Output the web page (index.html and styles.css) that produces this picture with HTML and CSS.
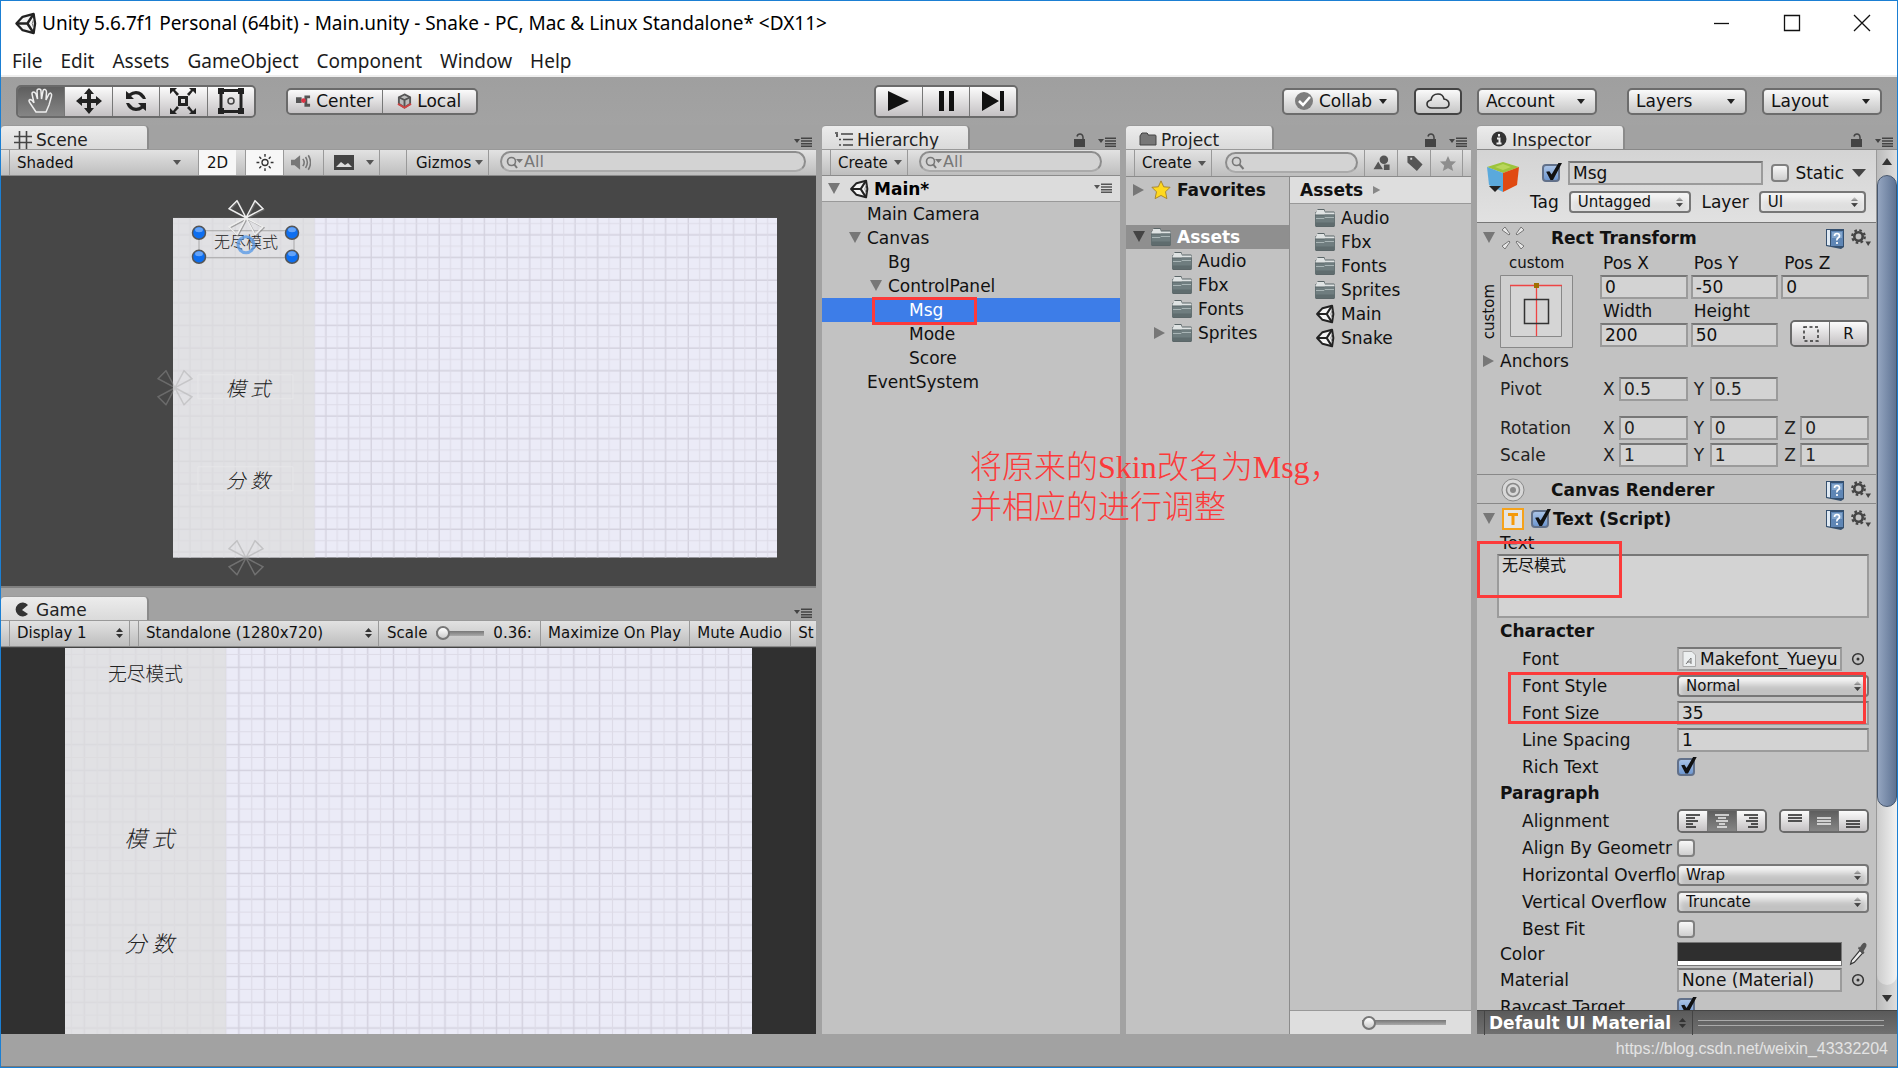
FILE: index.html
```html
<!DOCTYPE html>
<html lang="en">
<head>
<meta charset="utf-8">
<title>Unity 5.6.7f1 Personal (64bit) - Main.unity - Snake</title>
<link rel="stylesheet" href="styles.css">
</head>
<body>
<svg class="defs" aria-hidden="true">
  <symbol id="unity" viewBox="0 0 24 24"><path d="M2.5 12 9 5l11.500-3L22 12l-1.500 10L9 19z" fill="#f4f4f4" stroke="#222" stroke-width="2.400" stroke-linejoin="round"/><path d="M2.500 12H14L20.500 2M14 12l6.500 10" fill="none" stroke="#222" stroke-width="2.600"/><path d="M20.500 7.500 19 12l1.500 4.500" fill="none" stroke="#777" stroke-width="1"/></symbol>
  <symbol id="folder" viewBox="0 0 22 19"><path d="M1 6V4l2-1V1.500L4 .5h6l1 1V3h9l1 1v13.500l-1 1H2l-1-1z" fill="#5b6668"/><path d="M1.500 6V4.500L3 3V1.500h7L11 4h9.500V6z" fill="#dfe3e3"/><path d="M1.500 7H10l1-1h9.500v11.500h-19z" fill="#6f7d7f"/><path d="M2 10h8l1-1h9" fill="none" stroke="#a9b5b6"/><path d="M1.500 14h19v3.500h-19z" fill="#5f6c6e"/></symbol>
  <symbol id="menu" viewBox="0 0 18 10"><path d="M0 2h6L3 6z"/><path d="M7 .5h11v1.500H7zM7 3.200h11v1.500H7zM7 5.900h11v1.500H7zM7 8.500h11V10H7z"/></symbol>
  <symbol id="lock" viewBox="0 0 12 14"><path d="M0 6h11v8H0z"/><path d="M3 3.500Q3.500 1 6 1t3 3v3" fill="none" stroke="currentColor" stroke-width="1.500"/></symbol>
  <symbol id="down" viewBox="0 0 12 12"><path d="M0 0h12L6 11z"/></symbol>
  <symbol id="right" viewBox="0 0 12 12"><path d="M0 0v12l11-6z"/></symbol>
  <symbol id="lens" viewBox="0 0 18 14"><circle cx="5.500" cy="5.500" r="4" fill="none" stroke="currentColor" stroke-width="1.600"/><path d="m8.500 8.500 4 4.500" stroke="currentColor" stroke-width="2"/></symbol>
  <symbol id="lensmore" viewBox="0 0 18 14"><circle cx="5.500" cy="6.500" r="4" fill="none" stroke="currentColor" stroke-width="1.600"/><path d="m8 9 3 4" stroke="currentColor" stroke-width="2"/><path d="M10 4h7l-3.500 4z"/></symbol>
  <symbol id="book" viewBox="0 0 20 21"><path d="M1 1h18v18l-3 2L1 18z" fill="#35506f"/><path d="M2 2h3v15.500L2 17z" fill="#dfe9f3"/><path d="M6 3h12v15H6z" fill="#5f86b5"/><path d="M7 4h10v6H7z" fill="#84a6cc"/><path d="M9.500 8q0-2.500 2.500-2.500T14.500 8q0 1-1.500 2t-1 2.500M12 14v2" fill="none" stroke="#fff" stroke-width="1.700"/></symbol>
  <symbol id="gear" viewBox="0 0 20 18"><circle cx="7.500" cy="7.500" r="4.200" fill="none" stroke="#444" stroke-width="2.600"/><circle cx="7.500" cy="7.500" r="6.300" fill="none" stroke="#444" stroke-width="2.200" stroke-dasharray="2.600 2.350"/><path d="M14.500 12.500H20L17.200 17z" fill="#444"/></symbol>
  <symbol id="pick" viewBox="0 0 12 12"><circle cx="6" cy="6" r="4.600" fill="none" stroke="#333" stroke-width="1.300"/><circle cx="6" cy="6" r="1.300" fill="#333"/></symbol>
  <symbol id="flower" viewBox="0 0 36 36"><path d="M18 18 9 1 1 9zM18 18 27 1l8 8zM18 18 1 27l8 8zM18 18l17 9-8 8z" fill="none" stroke="currentColor" stroke-width="1.500"/></symbol>
  <symbol id="board" viewBox="0 0 1280 720">
    <pattern id="grid" width="48" height="48" patternUnits="userSpaceOnUse"><path d="M36 0v48M0 36h48" stroke="#d3d1de" stroke-width="2.800"/><path d="M12 0v48M0 12h48" stroke="#dddbe7" stroke-width="2.200"/></pattern>
    <rect width="1280" height="720" fill="#ebebf7"/><rect width="1280" height="720" fill="url(#grid)"/>
    <rect width="300" height="720" fill="#dddddc" fill-opacity=".72"/>
  </symbol>
</svg>

<div class="window">
  <header class="titlebar">
    <svg class="logo"><use href="#unity"/></svg>
    <h1>Unity 5.6.7f1 Personal (64bit) - Main.unity - Snake - PC, Mac &amp; Linux Standalone* &lt;DX11&gt;</h1>
    <div class="winbtns">
      <button aria-label="Minimize"><svg viewBox="0 0 18 18"><path d="M1 9.500h15"/></svg></button>
      <button aria-label="Maximize"><svg viewBox="0 0 18 18"><path d="M1.500 1.500h15v15h-15z"/></svg></button>
      <button aria-label="Close"><svg viewBox="0 0 18 18"><path d="m1 1 16 16M17 1 1 17"/></svg></button>
    </div>
  </header>
  <nav class="menubar"><a href="#">File</a><a href="#">Edit</a><a href="#">Assets</a><a href="#">GameObject</a><a href="#">Component</a><a href="#">Window</a><a href="#">Help</a></nav>

  <div class="toolbar">
    <div class="side">
      <div class="group tools">
        <button class="on" aria-label="Hand"><svg viewBox="0 0 26 26"><path d="M8 24 2 15q-2-3 0-3.500 2 0 4 3.500L4 6q0-2 1.500-2T8 6l1.500 5L9 3q0-2 2-2t2 2l.5 8L15 3q.5-2 2-1.500T18.500 4L18 12l3-6q1-1.500 2-.5t.5 2.500L21 17l-3 7z" fill="none" stroke="#eee" stroke-width="1.500"/></svg></button>
        <button aria-label="Move"><svg viewBox="0 0 26 26"><path d="m13 0 5 6h-3v5h5V8l6 5-6 5v-3h-5v5h3l-5 6-5-6h3v-5H6v3l-6-5 6-5v3h5V6H8z"/></svg></button>
        <button aria-label="Rotate"><svg viewBox="0 0 26 26"><path d="M3 3v8h8L8 8q4-3 8-1l4 4h3q-3-8-10-8-4 0-7 2.500zM23 23v-8h-8l3 3q-4 3-8 1l-4-4H3q3 8 10 8 4 0 7-2.500z"/></svg></button>
        <button aria-label="Scale"><svg viewBox="0 0 26 26"><path d="M8 8h10v10H8zm3 3v4h4v-4zM0 0h7L5 2l4 4-2 2-4-5-3 3zM26 0h-7l2 2-4 4 2 2 4-5 3 3zM0 26h7l-2-2 4-4-2-2-4 5-3-3zM26 26h-7l2-2-4-4 2-2 4 5 3-3z" fill-rule="evenodd"/></svg></button>
        <button aria-label="Rect"><svg viewBox="0 0 26 26"><path d="M6 2.500h14M6 23.500h14M3 6v14M23 6v14" stroke="#222" stroke-width="3"/><path d="M0 0h6v6H0zM20 0h6v6h-6zM0 20h6v6H0zM20 20h6v6h-6z"/><circle cx="13" cy="13" r="3" fill="none" stroke="#444" stroke-width="1.500"/></svg></button>
      </div>
      <div class="group pivot">
        <button><svg viewBox="0 0 16 14"><path d="M0 3h6v6H0zM9 1h6v3h-3v6h3v3H9z" fill="#555"/><circle cx="8" cy="6.500" r="2.500" fill="#d34"/></svg>Center</button>
        <button><svg viewBox="0 0 16 16"><path d="m8 1 6 3v7l-6 4-6-4V4z" fill="#bbb" stroke="#555" stroke-width="2"/><path d="m2 4 6 3 6-3M8 7v8" stroke="#555" stroke-width="2" fill="none"/><path d="m1 11 7 4 7-4" stroke="#c44" stroke-width="2" fill="none"/></svg>Local</button>
      </div>
    </div>
    <div class="group play">
      <button aria-label="Play"><svg viewBox="0 0 24 22"><path d="m1 1 21 10L1 21z"/></svg></button>
      <button aria-label="Pause"><svg viewBox="0 0 24 22"><path d="M5 1h5v20H5zM15 1h5v20h-5z"/></svg></button>
      <button aria-label="Step"><svg viewBox="0 0 24 22"><path d="m1 1 17 10L1 21zM19 1h4v20h-4z"/></svg></button>
    </div>
    <div class="side end">
      <button class="btn collab"><svg class="i18" viewBox="0 0 18 18"><circle cx="9" cy="9" r="9" fill="#7d7d7d"/><path d="m4 9 4 4 7-8" fill="none" stroke="#fff" stroke-width="2.500"/></svg>Collab<span class="tri"></span></button>
      <button class="btn cloud" aria-label="Cloud"><svg viewBox="0 0 24 18"><path d="M6 16q-5 0-5-4 0-3 4-4 1-6 7-6 5 0 6 5 5 1 5 5t-5 4z" fill="none" stroke="#333" stroke-width="1.600"/></svg></button>
      <button class="btn drop">Account<span class="tri"></span></button>
      <button class="btn drop wide">Layers<span class="tri"></span></button>
      <button class="btn drop">Layout<span class="tri"></span></button>
    </div>
  </div>

  <main class="panes">
    <div class="left">
      <section class="pane scene">
        <div class="tabs"><h2 class="tab"><svg class="i18" viewBox="0 0 18 18"><path d="M5.500 0v18M12.500 0v18M0 5.500h18M0 11.500h18" stroke="#444" stroke-width="1.600"/></svg>Scene</h2><svg class="menu"><use href="#menu"/></svg></div>
        <div class="strip">
          <button class="cell shaded">Shaded<span class="tri"></span></button>
          <button class="cell lit two">2D</button>
          <button class="cell lit sun" aria-label="Lighting"><svg viewBox="0 0 18 18"><circle cx="9" cy="9" r="3.200" fill="none" stroke="#333" stroke-width="1.400"/><path d="M9 0v3M9 15v3M0 9h3M15 9h3M3 3l2 2M13 13l2 2M15 3l-2 2M5 13l-2 2" stroke="#333" stroke-width="1.500"/></svg></button>
          <button class="cell icon" aria-label="Audio"><svg viewBox="0 0 22 18"><path d="M0 6h4l6-5v16l-6-5H0z" fill="#777"/><path d="M13 5q3 4 0 8M16 3q4 6 0 12M19 1q5 8 0 16" fill="none" stroke="#777" stroke-width="1.700"/></svg></button>
          <button class="cell fx" aria-label="Effects"><svg viewBox="0 0 20 15"><path d="M0 0h20v15H0z" fill="#444"/><path d="m2 12 5-5 4 3 3-2 4 4z" fill="#ddd"/></svg><span class="tri"></span></button>
          <span class="cell blank"></span>
          <button class="cell gizmos">Gizmos<span class="tri"></span></button>
          <label class="search"><svg><use href="#lensmore"/></svg><input type="text" aria-label="Search scene" placeholder="All"></label>
        </div>
        <svg class="view" viewBox="0 0 815 412" preserveAspectRatio="xMidYMid slice">
          <rect x="-400" y="-400" width="1700" height="1300" fill="#474747"/>
          <use href="#board" x="172" y="43" width="604" height="340"/>
          <g class="label" font-size="16"><text x="245" y="73">无尽模式</text><g font-size="20"><text class="it" x="247" y="221">模 式</text><text class="it" x="247" y="313">分 数</text></g></g>
          <path d="M197 200h95v24h-95zM197 292h95v24h-95z" fill="none" stroke="#e6e6e8"/>
          <path d="M198 56h95v27h-95z" fill="none" stroke="#999" stroke-opacity=".8"/>
          <circle cx="245" cy="70" r="8" fill="none" stroke="#5b9be6" stroke-opacity=".8" stroke-width="3"/>
          <use href="#flower" x="228" y="26" width="36" height="36" color="#77777799"/><use href="#flower" x="227" y="25" width="36" height="36" color="#eeeeee"/>
          <use href="#flower" x="156" y="195" width="36" height="36" color="#a0a0a066"/>
          <use href="#flower" x="227" y="365" width="36" height="36" color="#a0a0a077"/>
          <g fill="#0d6ef0" stroke="#555" stroke-width="1.500"><circle cx="198" cy="58" r="6.500"/><circle cx="291" cy="58" r="6.500"/><circle cx="198" cy="82" r="6.500"/><circle cx="291" cy="82" r="6.500"/></g>
          <g fill="#9cc6ff" fill-opacity=".6"><ellipse cx="198" cy="55" rx="4" ry="2.500"/><ellipse cx="291" cy="55" rx="4" ry="2.500"/><ellipse cx="198" cy="79" rx="4" ry="2.500"/><ellipse cx="291" cy="79" rx="4" ry="2.500"/></g>
        </svg>
      </section>
      <section class="pane game">
        <div class="tabs"><h2 class="tab"><svg class="i18" viewBox="0 0 18 18"><path d="M14 4A7 7 0 1 0 14 13L8 9z" fill="#333"/></svg>Game</h2><svg class="menu"><use href="#menu"/></svg></div>
        <div class="strip">
          <select class="cell display" aria-label="Display"><option>Display 1</option></select>
          <select class="cell aspect" aria-label="Aspect"><option>Standalone (1280x720)</option></select>
          <label class="cell scale">Scale<input type="range" min="0" max="100" value="0"><output>0.36:</output></label>
          <button class="cell">Maximize On Play</button>
          <button class="cell">Mute Audio</button>
          <button class="cell stats">St</button>
        </div>
        <div class="gameview">
          <svg viewBox="0 0 1280 720"><use href="#board" width="1280" height="720"/>
          <g class="label" font-size="35"><text x="150" y="61">无尽模式</text><g font-size="42"><text class="it" x="157" y="371">模 式</text><text class="it" x="157" y="567">分 数</text></g></g></svg>
        </div>
      </section>
    </div>

    <section class="pane hierarchy">
      <div class="tabs"><h2 class="tab"><svg class="i18" viewBox="0 0 18 18"><path d="M0 2h3M6 3h12M8 8.500h10M8 14h10M4 8.500h2M4 14h2M2 3v3" stroke="#444" stroke-width="1.700"/></svg>Hierarchy</h2><svg class="lock"><use href="#lock"/></svg><svg class="menu"><use href="#menu"/></svg></div>
      <div class="strip"><button class="cell create">Create<span class="tri"></span></button><label class="search"><svg><use href="#lensmore"/></svg><input type="text" aria-label="Search hierarchy" placeholder="All"></label></div>
      <div class="scenehead"><svg class="fold"><use href="#down"/></svg><svg class="i22"><use href="#unity"/></svg><b>Main*</b><svg class="menu"><use href="#menu"/></svg></div>
      <ul class="tree">
        <li class="d1">Main Camera</li>
        <li class="d1"><svg class="fold"><use href="#down"/></svg>Canvas</li>
        <li class="d2">Bg</li>
        <li class="d2"><svg class="fold"><use href="#down"/></svg>ControlPanel</li>
        <li class="d3 sel">Msg<span class="mark msgmark"></span></li>
        <li class="d3">Mode</li>
        <li class="d3">Score</li>
        <li class="d1">EventSystem</li>
      </ul>
      <p class="note">将原来的Skin改名为Msg，<br>并相应的进行调整</p>
    </section>

    <section class="pane project">
      <div class="tabs"><h2 class="tab"><svg class="i18" viewBox="0 0 18 18"><path d="M1 5q0-1 1-1V3l1-1h5l1 1v1h7q1 0 1 1v9H1z" fill="#777" stroke="#444"/></svg>Project</h2><svg class="lock"><use href="#lock"/></svg><svg class="menu"><use href="#menu"/></svg></div>
      <div class="strip"><button class="cell create">Create<span class="tri"></span></button><label class="search"><svg><use href="#lens"/></svg><input type="text" aria-label="Search project"></label>
        <button class="cell picon" aria-label="By type"><svg viewBox="0 0 18 18"><circle cx="11" cy="5" r="4.500"/><path d="m5 7 5 8H0zM11 10h6v6h-6z"/></svg></button>
        <button class="cell picon" aria-label="By label"><svg viewBox="0 0 18 18"><path d="M1 1h7l9 9-6 7-10-9zm3 2v2h2V3z" fill-rule="evenodd"/></svg></button>
        <button class="cell picon star" aria-label="Save search"><svg viewBox="0 0 18 18"><path d="m9 1 2.500 5.500 6 .5-4.500 4 1.500 6L9 14l-5.500 3L5 11 .5 7l6-.5z"/></svg></button></div>
      <div class="split">
        <ul class="folders">
          <li class="fav"><svg class="fold"><use href="#right"/></svg><svg class="i22" viewBox="0 0 22 22"><path d="m11 1 3 6.500 7 .5-5 5 1.500 7.500L11 17l-6.500 3.500L6 13 1 8l7-.5z" fill="#ffd91f" stroke="#a5812a"/></svg><b>Favorites</b></li>
          <li class="root"><svg class="fold"><use href="#down"/></svg><svg class="i22"><use href="#folder"/></svg><b>Assets</b></li>
          <li class="sub"><svg class="i22"><use href="#folder"/></svg>Audio</li>
          <li class="sub"><svg class="i22"><use href="#folder"/></svg>Fbx</li>
          <li class="sub"><svg class="i22"><use href="#folder"/></svg>Fonts</li>
          <li class="sub"><svg class="fold"><use href="#right"/></svg><svg class="i22"><use href="#folder"/></svg>Sprites</li>
        </ul>
        <div class="assets">
          <div class="crumb"><b>Assets</b><svg class="arrow"><use href="#right"/></svg></div>
          <ul>
            <li><svg class="i22"><use href="#folder"/></svg>Audio</li>
            <li><svg class="i22"><use href="#folder"/></svg>Fbx</li>
            <li><svg class="i22"><use href="#folder"/></svg>Fonts</li>
            <li><svg class="i22"><use href="#folder"/></svg>Sprites</li>
            <li><svg class="i22"><use href="#unity"/></svg>Main</li>
            <li><svg class="i22"><use href="#unity"/></svg>Snake</li>
          </ul>
          <div class="zoombar"><input type="range" min="0" max="100" value="0" aria-label="Icon size"></div>
        </div>
      </div>
    </section>

    <section class="pane inspector">
      <div class="tabs"><h2 class="tab"><svg class="i18" viewBox="0 0 18 18"><circle cx="9" cy="8" r="7.500" fill="#333"/><path d="M9 3v2.500M7 7.500h2.500v4.500M6.500 12.500h5" stroke="#eee" stroke-width="2" fill="none"/></svg>Inspector</h2><svg class="lock"><use href="#lock"/></svg><svg class="menu"><use href="#menu"/></svg></div>
      <div class="inspbody">
        <div class="props">
          <div class="object">
            <svg class="cube" viewBox="0 0 34 32"><path d="m17 1 16 5-16 6L1 6z" fill="#9cc43c"/><path d="m1 6 16 6v19L3 24z" fill="#5aa9dc"/><path d="m33 6-16 6v19l14-7z" fill="#e04a12"/><path d="m17 3 8 3-8 3-8-3z" fill="#b9d65a"/><path d="M3 25h12l-6 6z" fill="#222"/></svg>
            <div class="line1"><input type="checkbox" checked aria-label="Active"><input class="field" type="text" value="Msg" aria-label="Name"><label><input type="checkbox">Static</label><svg class="arrow" viewBox="0 0 14 8"><path d="M0 0h14L7 8z"/></svg></div>
            <div class="line2"><label for="tag">Tag</label><select id="tag" class="pop"><option>Untagged</option></select><label for="layer">Layer</label><select id="layer" class="pop"><option>UI</option></select></div>
          </div>

          <div class="comp">
            <h3><svg class="fold"><use href="#down"/></svg><svg class="i24" viewBox="0 0 24 24"><path d="m1 4 3-3 5 7-1 1zM23 4l-3-3-5 7 1 1zM1 20l3 3 5-7-1-1zM23 20l-3 3-5-7 1-1z" fill="#e8e8e8" stroke="#777"/></svg><span class="name gap">Rect Transform</span><svg class="book"><use href="#book"/></svg><svg class="gear"><use href="#gear"/></svg></h3>
            <div class="rect">
              <div class="anchor"><span class="cus">custom</span><span class="cus vert">custom</span>
                <svg viewBox="0 0 73 73"><path d="M.5.5h72v72H.5z" fill="#cfcfcf" stroke="#888"/><path d="M10.500 10.500h51v51h-51z" fill="#d5d5d5" stroke="#888"/><path d="M10 10.500h52M36.500 10v51" stroke="#e44" stroke-width="1.300"/><path d="M24.500 24.500h24v24h-24z" fill="none" stroke="#333" stroke-width="1.500"/><path d="M34 8h5v5h-5z" fill="#a07000"/></svg></div>
              <label>Pos X<input class="field" type="text" value="0"></label><label>Pos Y<input class="field" type="text" value="-50"></label><label>Pos Z<input class="field" type="text" value="0"></label>
              <label>Width<input class="field" type="text" value="200"></label><label>Height<input class="field" type="text" value="50"></label>
              <div class="group modes"><button aria-label="Blueprint"><svg viewBox="0 0 16 16"><path d="M1 1h14v14H1z" fill="none" stroke="#333" stroke-width="1.500" stroke-dasharray="3 2.500"/></svg></button><button>R</button></div>
            </div>
            <div class="anchors"><svg class="fold"><use href="#right"/></svg>Anchors</div>
            <div class="vec"><span>Pivot</span><label>X<input class="field" type="text" value="0.5"></label><label>Y<input class="field" type="text" value="0.5"></label></div>
            <div class="vec rot"><span>Rotation</span><label>X<input class="field" type="text" value="0"></label><label>Y<input class="field" type="text" value="0"></label><label>Z<input class="field" type="text" value="0"></label></div>
            <div class="vec"><span>Scale</span><label>X<input class="field" type="text" value="1"></label><label>Y<input class="field" type="text" value="1"></label><label>Z<input class="field" type="text" value="1"></label></div>
          </div>

          <div class="comp canvas"><h3><span class="fold"></span><svg class="i24" viewBox="0 0 24 24"><circle cx="12" cy="12" r="11" fill="#d8d8d8" stroke="#888"/><circle cx="12" cy="12" r="6.500" fill="none" stroke="#888" stroke-width="1.500"/><circle cx="12" cy="12" r="3" fill="#888"/></svg><span class="name gap">Canvas Renderer</span><svg class="book"><use href="#book"/></svg><svg class="gear"><use href="#gear"/></svg></h3></div>

          <div class="comp text">
            <h3><svg class="fold"><use href="#down"/></svg><svg class="i24" viewBox="0 0 24 24"><path d="M2 2h20v20H2z" fill="#e4e4e4" stroke="#f5a21b" stroke-width="2"/><path d="M7 7.500h10M12 7v11" stroke="#f59a0b" stroke-width="3"/></svg><input type="checkbox" checked aria-label="Enabled"><span class="name">Text (Script)</span><svg class="book"><use href="#book"/></svg><svg class="gear"><use href="#gear"/></svg></h3>
            <div class="textbox"><label for="txt">Text</label><textarea id="txt" class="field">无尽模式</textarea><span class="mark textmark"></span></div>
            <h4>Character</h4>
            <div class="prop in"><label for="font">Font</label><div class="field obj"><svg viewBox="0 0 14 16"><path d="M1 .5h9l3.500 3.500v11.500H1z" fill="#eceff0" stroke="#aaa"/><path d="m4 13 5-6v6M5 11h4" fill="none" stroke="#777"/></svg><input id="font" type="text" value="Makefont_Yueyu"></div><svg class="pick"><use href="#pick"/></svg></div>
            <div class="marked">
              <div class="prop in"><label for="fs">Font Style</label><select id="fs" class="pop"><option>Normal</option></select></div>
              <div class="prop in"><label for="fz">Font Size</label><input id="fz" class="field" type="text" value="35"></div>
              <span class="mark fontmark"></span>
            </div>
            <div class="prop in"><label for="ls">Line Spacing</label><input id="ls" class="field" type="text" value="1"></div>
            <div class="prop in"><label for="rt">Rich Text</label><input id="rt" type="checkbox" checked></div>
            <h4>Paragraph</h4>
            <div class="prop in"><span>Alignment</span>
              <div class="aligns"><div class="group"><button aria-label="Left"><svg viewBox="0 0 14 14"><path d="M0 1h14M0 4h9M0 7h12M0 10h7M0 13h10"/></svg></button><button class="on" aria-label="Center"><svg viewBox="0 0 14 14"><path d="M0 1h14M3 4h8M1 7h12M4 10h6M2 13h10"/></svg></button><button aria-label="Right"><svg viewBox="0 0 14 14"><path d="M0 1h14M5 4h9M2 7h12M7 10h7M4 13h10"/></svg></button></div>
              <div class="group"><button aria-label="Top"><svg viewBox="0 0 14 14"><path d="M0 1h14M0 4h14M0 7h14"/></svg></button><button class="on" aria-label="Middle"><svg viewBox="0 0 14 14"><path d="M0 4h14M0 7h14M0 10h14"/></svg></button><button aria-label="Bottom"><svg viewBox="0 0 14 14"><path d="M0 7h14M0 10h14M0 13h14"/></svg></button></div></div></div>
            <div class="prop in"><label for="ag">Align By Geometr</label><input id="ag" type="checkbox"></div>
            <div class="prop in"><label for="ho">Horizontal Overflo</label><select id="ho" class="pop"><option>Wrap</option></select></div>
            <div class="prop in"><label for="vo">Vertical Overflow</label><select id="vo" class="pop"><option>Truncate</option></select></div>
            <div class="prop in"><label for="bf">Best Fit</label><input id="bf" type="checkbox"></div>
            <div class="prop color"><span>Color</span><button class="swatch" aria-label="Color"></button><svg class="dropper" viewBox="0 0 20 26"><path d="M2 24 3 20 12 9l3 3-9 10z" fill="#eee" stroke="#333" stroke-width="1.300"/><path d="m10 7 6 6 1-2-1-1 3-5q1-3-1-4t-4 2l-2 3-1-1z" fill="#555"/></svg></div>
            <div class="prop"><label for="mat">Material</label><div class="field obj"><input id="mat" type="text" value="None (Material)"></div><svg class="pick"><use href="#pick"/></svg></div>
            <div class="prop"><label for="rc">Raycast Target</label><input id="rc" type="checkbox" checked></div>
          </div>
        </div>
        <div class="scroll"><svg viewBox="0 0 12 12"><path d="M1 10h10L6 3z"/></svg><div class="track"><div class="thumb"></div></div><svg viewBox="0 0 12 12"><path d="M1 2h10L6 9z"/></svg></div>
      </div>
      <div class="preview"><select aria-label="Preview"><option>Default UI Material</option></select><span class="grip"></span></div>
    </section>
  </main>
  <footer class="status">https://blog.csdn.net/weixin_43332204</footer>
</div>
</body>
</html>
```
FILE: styles.css
```css
* { box-sizing: border-box; }
body { margin: 0; font: 17px/24px "DejaVu Sans", "Noto Sans CJK SC", sans-serif; color: #111; }
h1, h2, h3, h4, ul, p { margin: 0; padding: 0; font-size: inherit; font-weight: normal; list-style: none; }
button, input, select, textarea { font: inherit; color: inherit; margin: 0; padding: 0; border: 0; background: none; border-radius: 0; appearance: none; outline: 0; min-width: 0; }
svg { flex: none; fill: currentColor; display: block; }
.defs { position: absolute; width: 0; height: 0; }
.i18 { width: 18px; height: 18px; }
.i22 { width: 22px; height: 20px; }
.i24 { width: 24px; height: 24px; }

.window { height: 100vh; border: 1px solid #1b7fd3; display: flex; flex-direction: column; background: #a2a2a2; overflow: hidden; }
.titlebar { height: 44px; background: #fff; display: flex; align-items: center; padding-left: 13px; color: #000; }
.logo { width: 23px; height: 23px; margin-right: 5px; }
h1 { font: 19px/26px "Noto Sans", sans-serif; flex: 1; white-space: nowrap; }
.winbtns { display: flex; }
.winbtns button { width: 70px; height: 44px; display: grid; place-items: center; }
.winbtns svg { width: 18px; height: 18px; fill: none; stroke: #111; stroke-width: 1.3; }
.menubar { height: 32px; background: #fff; border-bottom: 2px solid #eee; display: flex; gap: 18px; padding-left: 11px; font: 19px/32px "Noto Sans", sans-serif; }
.menubar a { color: #1c1c1c; text-decoration: none; }

.toolbar { height: 48px; padding: 0 15px; display: grid; grid-template-columns: 1fr auto 1fr; align-items: center; background: linear-gradient(#9f9f9f, #a3a3a3); }
.side { display: flex; align-items: center; gap: 30px; }
.end { justify-content: flex-end; gap: 15px; }
.group { display: flex; border: 2px solid #6a6a6a; border-radius: 5px; overflow: hidden; }
.group button { display: flex; align-items: center; justify-content: center; gap: 5px; flex: 1; background: linear-gradient(#fbfbfb, #c4c1c3); border-left: 1px solid #777; }
.group button:first-child { border-left: 0; }
.group button.on { background: linear-gradient(#5e5e5e, #858585); }
.tools { width: 240px; height: 33px; }
.tools svg { width: 26px; height: 26px; fill: #222; }
.pivot { width: 192px; height: 27px; }
.pivot svg { width: 15px; height: 16px; }
.play { width: 144px; height: 33px; margin-right: 6px; }
.play svg { width: 24px; height: 22px; fill: #111; }
.btn { height: 27px; border: 2px solid #6c6c6c; border-radius: 5px; background: linear-gradient(#fafafa, #c6c6c6); display: flex; align-items: center; gap: 6px; padding: 0 10px 0 7px; white-space: nowrap; }
.tri { margin-left: auto; border: 4px solid transparent; border-top: 5px solid #222; border-bottom: 0; }
.collab { width: 117px; padding-left: 11px; }
.cloud { width: 48px; padding: 0; justify-content: center; border-color: #444; }
.cloud svg { width: 24px; height: 18px; }
.drop { width: 120px; }
.drop.wide { margin-left: 15px; }

.panes { flex: 1; min-height: 0; display: grid; grid-template-columns: 815fr 298fr 345fr 420fr; gap: 6px; position: relative; }
.pane { display: flex; flex-direction: column; min-width: 0; min-height: 0; background: #c2c2c2; }
.hierarchy, .project { position: relative; }
.left { display: flex; flex-direction: column; gap: 8px; min-width: 0; min-height: 0; }
.scene { flex: 462 1 0; }
.game { flex: 438 1 0; }
.tabs { height: 24px; flex: none; display: flex; align-items: flex-end; background: #a2a2a2; padding-right: 4px; gap: 12px; color: #444; }
.tab { width: 148px; height: 24px; margin-right: auto; background: linear-gradient(#ececec, #dadada); border-right: 2px solid #8b8b8b; border-top: 1px solid #999; border-radius: 4px 5px 0 0; display: flex; align-items: center; gap: 4px; padding: 4px 0 0 13px; color: #222; white-space: nowrap; }
.menu { width: 18px; height: 10px; margin-bottom: 2px; }
.lock { width: 12px; height: 14px; margin-bottom: 2px; }
.strip { height: 27px; flex: none; display: flex; align-items: stretch; background: linear-gradient(#e2e2e2, #bebebe); border-top: 1px solid #999; border-bottom: 1px solid #8b8b8b; padding-left: 8px; font-size: 15px; line-height: 22px; overflow: hidden; }
.project .strip { height: 28px; }
.cell { flex: none; display: flex; align-items: center; border-left: 1px solid #999; padding: 0 8px 0 7px; white-space: nowrap; }
.cell .tri, .cell.fx .tri { border-top-color: #555; }
.cell svg { width: 20px; height: 17px; }
.shaded { width: 180px; }
.lit { background: #f7f7f7; justify-content: center; padding: 0; }
.two { width: 38px; margin: 0 9px; }
.sun { width: 38px; }
.icon { width: 40px; }
.fx { width: 56px; padding: 0 5px 0 10px; }
.blank { width: 27px; }
.gizmos { width: 83px; border-right: 1px solid #999; padding: 0 5px 0 9px; }
.stats { padding-right: 0; }
.search { flex: 1; min-width: 0; margin: 1px 10px 3px 11px; border: 2px solid #8d8d8d; border-bottom-color: #aaa; border-radius: 12px; background: #d3d3d3; display: flex; align-items: center; padding-left: 4px; color: #777; font-size: 16px; line-height: 18px; }
.search svg { width: 18px; height: 14px; }
.search input { width: 100%; }
.search input::placeholder { color: #777; opacity: 1; }
.create { width: 78px; border-right: 1px solid #999; padding-right: 5px; }
.hierarchy .search { margin-right: 18px; }
.project .search { margin: 2px 6px 3px 13px; }
.picon { width: 33px; padding: 0 7px; color: #555; }
.star { color: #8e8e8e; border-right: 1px solid #999; margin-right: 8px; }
.view { flex: 1; width: 100%; min-height: 0; border-bottom: 2px solid #808080; }
.label { fill: #222; text-anchor: middle; font-family: "Noto Sans CJK SC", sans-serif; font-weight: 300; }
.it { font-style: italic; }
.gameview { flex: 1; min-height: 0; background: #303030; border-top: 1px solid #444; }
.gameview svg { width: 100%; height: 100%; }
select.cell, select.pop, .preview select { background: url('data:image/svg+xml,<svg xmlns="http://www.w3.org/2000/svg" width="8" height="10"><path d="M0 4h7L3.5 0zM0 6h7L3.500 10z" fill="%23333"/></svg>') no-repeat right 5px center; }
.display { width: 121px; border-right: 1px solid #999; margin-right: 8px; }
.aspect { width: 240px; }
.scale { width: 162px; padding-left: 8px; }
.scale input { width: 48px; margin: 0 9px; }
input[type=range] { height: 16px; background: linear-gradient(#777, #aaa) no-repeat center / 100% 5px; border-radius: 3px; }
input[type=range]::-webkit-slider-thumb { appearance: none; width: 14px; height: 14px; border-radius: 50%; border: 2px solid #777; background: linear-gradient(#fff, #ccc); }

.scenehead { height: 26px; flex: none; background: #dcdcdc; border-bottom: 1px solid #999; display: flex; align-items: center; padding: 0 8px 0 6px; color: #555; }
.scenehead b { color: #000; flex: 1; margin-left: 4px; }
.scenehead .i22 { margin-left: 8px; }
.fold { width: 12px; height: 12px; color: #777; flex: none; }
.tree li { height: 24px; display: flex; align-items: center; position: relative; white-space: nowrap; }
.tree .d1 { padding-left: 45px; }
.tree .d2 { padding-left: 66px; }
.tree .d3 { padding-left: 87px; }
.tree .fold { margin: 0 6px 0 -18px; }
.sel { background: #3d7de8; color: #fff; }
.mark { position: absolute; border: 3px solid #fc3a3a; pointer-events: none; z-index: 2; }
.msgmark { left: 50px; top: -1px; width: 105px; height: 28px; }
.note { position: absolute; z-index: 3; left: 148px; top: 322px; font: 300 32px/40px "Liberation Serif", "Noto Sans CJK SC", serif; color: #fc3a3a; white-space: nowrap; }

.split { flex: 1; min-height: 0; display: grid; grid-template-columns: 164fr 181fr; }
.split li { height: 24px; display: flex; align-items: center; gap: 5px; white-space: nowrap; }
.folders { border-right: 1px solid #8c8c8c; padding-top: 1px; }
.folders li { padding-left: 7px; }
.folders .fav { margin-bottom: 23px; }
.folders .sub { padding-left: 45px; }
.sub .fold { margin-left: -17px; }
.root { background: #8f8f8f; color: #fff; }
.root .fold { color: #444; }
.assets { display: flex; flex-direction: column; min-width: 0; }
.crumb { height: 27px; background: #dedede; border-bottom: 1px solid #999; display: flex; align-items: center; gap: 10px; padding-left: 10px; color: #888; }
.crumb b { color: #111; }
.crumb .arrow { width: 8px; height: 8px; }
.assets ul { flex: 1; padding: 2px 0 0 24px; }
.zoombar { height: 24px; background: #dedede; border-top: 1px solid #999; display: flex; justify-content: flex-end; align-items: center; padding-right: 25px; }
.zoombar input { width: 84px; }

.inspbody { flex: 1; min-height: 0; display: grid; grid-template-columns: 1fr 21px; border-top: 1px solid #888; }
.props { overflow: hidden; min-width: 0; white-space: nowrap; }
.field { height: 24px; width: 100%; border: 2px solid #9b9b9b; border-top-color: #777; background: #d3d3d3; padding: 0 3px; }
.pop { height: 22px; width: 100%; border: 2px solid #777; border-radius: 4px; background-color: #dcdcdc; box-shadow: inset 0 7px 6px #f4f4f4; padding: 0 16px 0 7px; font-size: 15px; line-height: 18px; }
input[type=checkbox] { flex: none; width: 18px; height: 18px; border: 2px solid #808080; border-radius: 4px; background: linear-gradient(#f8f8f8, #cfcfcf); position: relative; }
input[type=checkbox]:checked { background: linear-gradient(#a9c3e6, #6e97d0); border-color: #62718a; }
input[type=checkbox]:checked::after { content: ""; position: absolute; inset: -3px -4px 0 0; background: #111; clip-path: polygon(12% 52%, 30% 48%, 42% 68%, 80% 0, 100% 0, 50% 100%, 36% 100%); }
.object { height: 73px; background: linear-gradient(#d4d4d4, #e1e1e1); border-bottom: 1px solid #777; display: grid; grid-template: 24px 22px / 34px 1fr; gap: 6px 0; padding: 11px 10px 0 9px; }
.cube { width: 34px; height: 32px; grid-row: 1 / 3; }
.line1, .line2 { display: flex; align-items: center; min-width: 0; }
.line1 { padding-left: 22px; gap: 8px; }
.line1 .field { flex: 1; }
.line1 label { display: flex; align-items: center; gap: 6px; }
.line1 .arrow { width: 14px; height: 8px; color: #444; }
.line2 { padding-left: 10px; gap: 10px; }
.line2 .pop { flex: 124 1 0; }
.line2 #layer { flex-grow: 104; }
.comp { border-bottom: 1px solid #888; padding: 0 7px 6px 23px; }
.comp h3 { height: 28px; margin: 0 -2px 0 -17px; padding-top: 2px; display: flex; align-items: center; font-weight: bold; gap: 6px; }
.comp .name { flex: 1; margin-left: -2px; }
.comp .name.gap { margin-left: 20px; }
.book { width: 20px; height: 21px; }
.gear { width: 20px; height: 18px; }
.canvas { padding-bottom: 0; }
.rect { display: grid; grid-template-columns: 97px repeat(3, 1fr); grid-template-rows: 48px 48px; column-gap: 3px; }
.rect label { display: flex; flex-direction: column; padding-top: 1px; line-height: 23px; text-indent: 3px; }
.rect .field { text-indent: 0; }
.anchor { grid-row: 1 / 3; position: relative; padding-top: 24px; }
.anchor svg { width: 73px; height: 73px; }
.cus { position: absolute; top: 0; left: 9px; font-size: 15px; }
.cus.vert { writing-mode: vertical-rl; transform: rotate(180deg); left: -23px; top: 33px; }
.modes { height: 27px; margin: 21px 0 0 9px; font-size: 15px; align-self: start; }
.modes svg { width: 16px; height: 16px; }
.anchors { height: 28px; display: flex; align-items: center; margin-left: -17px; gap: 5px; }
.vec { display: grid; grid-template-columns: 97px repeat(3, 1fr); column-gap: 3px; align-items: center; height: 27px; color: #222; }
.vec label { display: grid; grid-template-columns: 19px 1fr; text-indent: 3px; }
.vec .field { text-indent: 0; }
.rot { margin-top: 12px; }
.text { border: 0; }
.textbox { position: relative; display: flex; flex-direction: column; margin-left: -3px; }
.textbox label { padding-left: 3px; line-height: 22px; }
textarea.field { height: 64px; resize: none; font-size: 16px; line-height: 20px; }
.textmark { left: -20px; top: 9px; width: 145px; height: 57px; }
.text h4 { font-weight: bold; line-height: 27px; }
.marked { position: relative; }
.fontmark { left: 8px; right: 3px; top: 0; height: 52px; }
.prop { height: 27px; display: grid; grid-template-columns: 177px 1fr auto; align-items: center; }
.prop > :first-child { overflow: hidden; }
.prop.in > :first-child { padding-left: 22px; }
.obj { display: flex; align-items: center; gap: 4px; overflow: hidden; }
.obj svg { width: 14px; height: 16px; }
.obj input { width: 100%; }
.pick { width: 14px; height: 14px; margin: 0 4px 0 9px; }
.aligns { display: flex; justify-content: space-between; }
.aligns .group { width: 90px; height: 24px; }
.aligns svg { width: 14px; height: 14px; stroke: #222; stroke-width: 1.5; }
.aligns .on svg { stroke: #eee; }
.color { height: 24px; }
.swatch { height: 24px; border: 1px solid #777; background: linear-gradient(#2f2f2f 18px, #fff 18px); }
.dropper { width: 20px; height: 24px; margin: 0 1px 0 6px; }
.scroll { display: flex; flex-direction: column; align-items: center; background: linear-gradient(90deg, #bbb, #ddd); border-left: 1px solid #999; color: #333; }
.scroll svg { width: 12px; height: 22px; }
.track { flex: 1; width: 100%; background: linear-gradient(90deg, #ccc, #f2f2f2); border-radius: 10px; margin: 3px 0; }
.thumb { height: 78%; border: 1px solid #46566c; border-radius: 10px; background: linear-gradient(90deg, #94a5c0, #5e7393); }
.preview { height: 24px; flex: none; background: linear-gradient(#5a5a5a, #707070); border-top: 1px solid #444; display: flex; align-items: center; gap: 5px; padding: 0 13px 0 7px; color: #fff; font-weight: bold; }
.preview select { border: solid #444; border-width: 0 1px; padding: 0 20px 0 4px; }
.grip { flex: 1; height: 6px; border: solid #aaa; border-width: 1px 0; }
.status { height: 33px; flex: none; border-bottom: 1px solid #777; text-align: right; padding-right: 9px; font: 16px/30px "Liberation Sans", sans-serif; color: #e4e4e4; }
```
